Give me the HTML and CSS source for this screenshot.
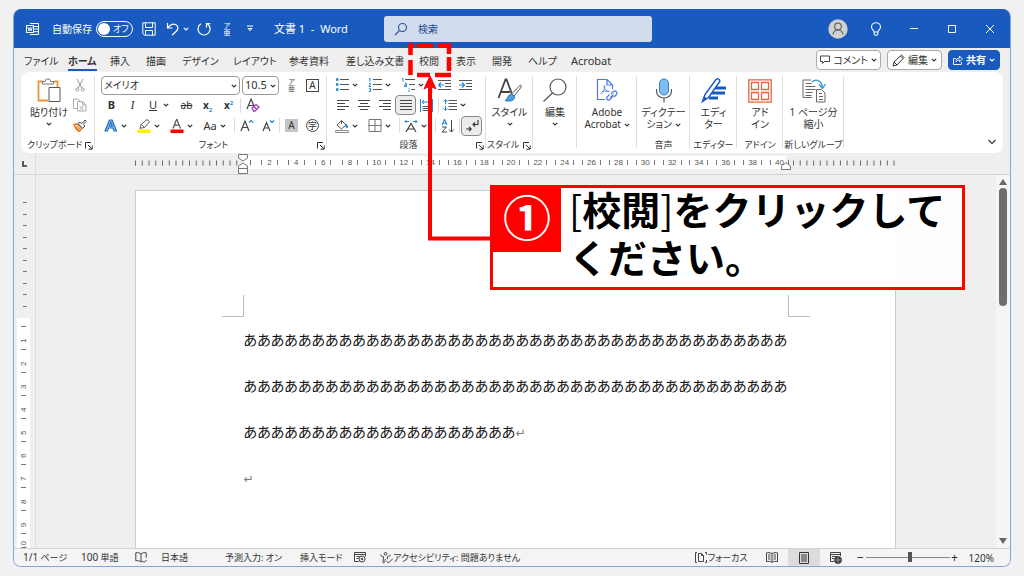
FILE: index.html
```html
<!DOCTYPE html>
<html lang="ja">
<head>
<meta charset="utf-8">
<title>文書 1 - Word</title>
<link rel="stylesheet" href="styles.css">
</head>
<body>
<svg class="defs" aria-hidden="true">
  <symbol id="chev" viewBox="0 0 6 6"><path d="M.8 1.800 3 4l2.200-2.200" fill="none" stroke="currentColor" stroke-width="1.200"/></symbol>
  <symbol id="launch" viewBox="0 0 8 8"><path d="M.5 6.500V.5H6M3 3l4 4M7.200 3.500v3.700H3.500" fill="none" stroke="currentColor"/></symbol>
</svg>
<div class="window">
  <header class="titlebar">
    <div class="title-left">
      <svg class="ic logo" viewBox="0 0 14 14"><path d="M4 1.500h8.500v11H4M4 4.500h8.500M4 7h8.500M4 9.700h8.500" fill="none" stroke="#fff"/><rect x="0.500" y="3.500" width="7" height="7" fill="#185abd" stroke="#fff"/><path d="m1.800 5 1.100 4L4 5.500 5.100 9l1.100-4" fill="none" stroke="#fff" stroke-width=".9"/></svg>
      <span class="autosave" id="as">自動保存</span>
      <button class="toggle" role="switch" aria-checked="false" aria-labelledby="as"><i class="knob"></i><span>オフ</span></button>
      <button class="tb save" aria-label="保存"><svg width="14" height="14" viewBox="0 0 14 14" fill="none" stroke="#fff"><path d="M.8.8h12.400v12.400H2.500L.8 11.500zM3.500 1v4.500h7V1M3.500 13V8.500h7V13"/></svg></button>
      <button class="tb undo" aria-label="元に戻す"><svg width="13" height="14" viewBox="0 0 13 14" fill="none" stroke="#fff" stroke-width="1.200"><path d="M1.500 1v5h5M1.500 6C4 3 7 1.500 9.500 2.500c3 1.200 3 4.500 1 6.500L6 13.200"/></svg><svg class="chev"><use href="#chev"/></svg></button>
      <button class="tb redo" aria-label="やり直し"><svg width="14" height="14" viewBox="0 0 14 14" fill="none" stroke="#fff" stroke-width="1.200"><path d="M4 1.800a6 6 0 1 0 6.500.3M9.500 5.500V1.700h3.800"/></svg></button>
      <button class="tb ruby"><span>ア</span><span>亜</span></button>
      <button class="tb more" aria-label="カスタマイズ"><svg width="6" height="7" viewBox="0 0 6 7" fill="none" stroke="#fff"><path d="M0 1h6M1 3.500h4L3 5.800z"/></svg></button>
      <span class="doctitle lat">文書 1&nbsp; - &nbsp;Word</span>
    </div>
    <label class="search">
      <svg width="14" height="14" viewBox="0 0 14 14" fill="none" stroke="#2b4f94" stroke-width="1.100"><circle cx="8.500" cy="5.500" r="4"/><path d="M5.500 8.500 1 13"/></svg>
      <input type="text" placeholder="検索" aria-label="検索">
    </label>
    <div class="title-right">
      <button class="tb avatar" aria-label="アカウント"><svg width="20" height="20" viewBox="0 0 20 20"><circle cx="10" cy="10" r="9.700" fill="#d0d0d0"/><g fill="none" stroke="#666" stroke-width="1.200"><circle cx="10" cy="7.500" r="3.300"/><path d="M5 15.500c.5-3.500 2.500-4.500 5-4.500s4.500 1 5 4.500"/></g></svg></button>
      <button class="tb" aria-label="ヒント"><svg width="12" height="14" viewBox="0 0 12 14" fill="none" stroke="#fff" stroke-width="1.100"><path d="M4 10C4 8 1.500 7.500 1.500 5a4.500 4.300 0 0 1 9 0C10.500 7.500 8 8 8 10zM4.200 10v2l1 1.300h1.600l1-1.300v-2"/></svg></button>
      <button class="tb" aria-label="最小化"><svg width="8" height="8" viewBox="0 0 8 8"><path d="M0 3.500h8" stroke="#fff"/></svg></button>
      <button class="tb" aria-label="最大化"><svg width="8" height="8" viewBox="0 0 8 8"><path d="M.5.5h7v7h-7z" fill="none" stroke="#fff"/></svg></button>
      <button class="tb" aria-label="閉じる"><svg width="8" height="8" viewBox="0 0 8 8"><path d="m0 0 8 8M8 0 0 8" stroke="#fff"/></svg></button>
    </div>
  </header>

  <div class="tabrow">
    <nav class="tabs">
      <a href="#">ファイル</a><a href="#" class="active">ホーム</a><a href="#">挿入</a><a href="#">描画</a><a href="#">デザイン</a><a href="#">レイアウト</a><a href="#">参考資料</a><a href="#">差し込み文書</a><a href="#">校閲</a><a href="#">表示</a><a href="#">開発</a><a href="#">ヘルプ</a><a href="#" class="lat">Acrobat</a>
    </nav>
    <div class="tabactions">
      <button class="pill"><svg width="10" height="10" viewBox="0 0 10 10" fill="none" stroke="#444"><path d="M.5 1h9v5.500H4.500L2.500 8.500v-2h-2z"/></svg>コメント<svg class="chev"><use href="#chev"/></svg></button>
      <button class="pill"><svg width="13" height="13" viewBox="0 0 13 13" fill="none" stroke="#333"><path d="m1 12 1-4 7.500-7 2.500 2.500L5 11zM8.500 2 11 4.500M2 8l3 3"/></svg>編集<svg class="chev"><use href="#chev"/></svg></button>
      <button class="pill share"><svg width="10" height="10" viewBox="0 0 10 10" fill="none" stroke="#fff"><path d="M3 3.500H.5v6h8V7M3 7c0-3 1.500-4 3.500-4V1l3 3-3 2.700V5C5 5 4 5.500 3 7z" stroke-width=".9"/></svg>共有<svg class="chev"><use href="#chev"/></svg></button>
    </div>
  </div>

  <div class="ribbon">
    <section class="group g-clip">
      <div class="clip">
        <button class="big paste"><svg width="26" height="25" viewBox="0 0 26 25" fill="none"><path d="M7 3.500H2.500v19H12M18 3.500h3.500V9" stroke="#e8963a" stroke-width="1.800"/><path d="M6.500 6V3.500h2.700a2.500 2.500 0 0 1 5.400 0h2.900V6z" stroke="#777" fill="#fff"/><path d="M13 9.500h11v14H13z" fill="#fff" stroke="#555"/></svg><span>貼り付け</span><svg class="chev"><use href="#chev"/></svg></button>
        <div class="stack">
          <button aria-label="切り取り"><svg width="10" height="14" viewBox="0 0 10 14" fill="none" stroke="#999"><path d="M2 1l4.800 9M8 1 3.200 10"/><circle cx="2.300" cy="11.500" r="1.500"/><circle cx="7.700" cy="11.500" r="1.500"/></svg></button>
          <button aria-label="コピー"><svg width="14" height="14" viewBox="0 0 14 14" fill="none" stroke="#aaa"><path d="M4.500 10.500h-4V1h4.500l2 2M4.500 3.500h5l3.500 3.500v6H4.500zM9.500 3.500V7H13M6.500 9h4M6.500 11h4"/></svg></button>
          <button aria-label="書式のコピー"><svg width="14" height="13" viewBox="0 0 14 13"><path d="m1 5.500 4-.5 4 4-2.500 3.500C4 11.500 2 9 1 5.500z" fill="#fbd7b0" stroke="#e07b20" stroke-width="1.400"/><path d="m5 4.500 2-1.500 1.800 1.500L12 1l1.300 1.300-3 3L12 7 9.500 9.300z" fill="#fff" stroke="#444"/><path d="m3 8 3 3M4.500 7l2.500 3" stroke="#e07b20"/></svg></button>
        </div>
      </div>
      <div class="glabel">クリップボード<svg class="launch"><use href="#launch"/></svg></div>
    </section>

    <section class="group g-font">
      <div class="row combos">
        <span class="combo wide"><select aria-label="フォント"><option>メイリオ</option></select><svg class="chev"><use href="#chev"/></svg></span>
        <span class="combo small"><select class="lat" aria-label="フォント サイズ"><option>10.5</option></select><svg class="chev"><use href="#chev"/></svg></span>
        <button class="ruby dark"><span>ア</span><span>亜</span></button>
        <button><span class="boxed">A</span></button>
      </div>
      <div class="row">
        <button><b class="lt">B</b></button><button><i class="lt serif">I</i></button><button class="split"><u class="lt">U</u><svg class="chev"><use href="#chev"/></svg></button><button><s class="lt sm">ab</s></button><button><b class="lt sm">x<sub>2</sub></b></button><button><b class="lt sm">x<sup>2</sup></b></button><i class="sep"></i>
        <button aria-label="書式のクリア"><svg width="14" height="14" viewBox="0 0 14 14" fill="none"><path d="M1 11 5 1l3.500 8M2.500 7.500h5" stroke="#444" stroke-width="1.200"/><path d="m6 10 4-3.500 3 2.500-4 4H7.500zM8 8.500l2.500 3" stroke="#9b3fb5" stroke-width="1.300"/></svg></button>
      </div>
      <div class="row">
        <button class="split" aria-label="文字の効果"><svg width="14" height="13" viewBox="0 0 14 13"><path d="M1 12 5.500 1h2.500L12.500 12H10L9 9H4.500l-1 3zM5.300 6.800h3L6.800 3.200z" fill="#8cc4ee" stroke="#1f6fc0" stroke-width="1.200"/></svg><svg class="chev"><use href="#chev"/></svg></button>
        <button class="split" aria-label="蛍光ペン"><svg width="14" height="14" viewBox="0 0 14 14"><path d="M.5 10.500h13V14H.5z" fill="#fff000"/><path d="M3 9.500l1-4 6-5 2.500 2.300L7.500 8.500 4.500 9zM4.500 5.500l3 3" fill="none" stroke="#555"/></svg><svg class="chev"><use href="#chev"/></svg></button>
        <button class="split" aria-label="フォントの色"><svg width="14" height="14" viewBox="0 0 14 14"><path d="M.5 10.500h13V14H.5z" fill="#f00"/><path d="M3 9.500 6.700 0 10.500 9.500M4.200 6.200h5" fill="none" stroke="#555" stroke-width="1.200"/></svg><svg class="chev"><use href="#chev"/></svg></button>
        <button class="split"><span class="lt">Aa</span><svg class="chev"><use href="#chev"/></svg></button><i class="sep"></i>
        <button aria-label="拡大"><svg width="14" height="13" viewBox="0 0 14 13" fill="none"><path d="M1 12 5 2l4 10M2.500 8.500h5" stroke="#444" stroke-width="1.200"/><path d="m9 3.500 2-2 2 2" stroke="#1e88d0" stroke-width="1.200"/></svg></button>
        <button aria-label="縮小"><svg width="14" height="13" viewBox="0 0 14 13" fill="none"><path d="M2 12 5.500 3.500 9 12M3.200 9h4.600" stroke="#444" stroke-width="1.200"/><path d="m9 1.500 2 2 2-2" stroke="#1e88d0" stroke-width="1.200"/></svg></button><i class="sep"></i>
        <button><span class="shaded">A</span></button>
        <button><span class="circled">字</span></button>
      </div>
      <div class="glabel">フォント<svg class="launch"><use href="#launch"/></svg></div>
    </section>

    <section class="group g-para">
      <div class="row">
        <button class="split" aria-label="箇条書き"><svg width="14" height="14" viewBox="0 0 14 14"><path d="M1 1.500h2.500M1 6.500h2.500M1 11.500h2.500" stroke="#1e88d0" stroke-width="2.400"/><path d="M5 1.500h9M5 6.500h9M5 11.500h9" stroke="#555"/></svg><svg class="chev"><use href="#chev"/></svg></button>
        <button class="split" aria-label="段落番号"><svg width="14" height="14" viewBox="0 0 14 14" fill="none"><path d="M1 .5h1v3M1 5.500h1.500L1 8.500h2M1 10.500h1.500v3H1M1.500 12h1" stroke="#1e88d0"/><path d="M5 1.500h9M5 6.500h9M5 11.500h9" stroke="#555"/></svg><svg class="chev"><use href="#chev"/></svg></button>
        <button class="split" aria-label="アウトライン"><svg width="14" height="14" viewBox="0 0 14 14" fill="none"><path d="M1 .5h1v3M4 5.500h1.500v3H3.500V7h2M8 10v.8M8 11.800V14" stroke="#1e88d0"/><path d="M4 1.500h10M8 6.500h6M10 11.500h4" stroke="#555"/></svg><svg class="chev"><use href="#chev"/></svg></button><i class="sep"></i>
        <button aria-label="インデントを減らす"><svg width="13" height="12" viewBox="0 0 13 12" fill="none"><path d="M0 1.500h13M7 4.500h6M7 7.500h6M0 10.500h13" stroke="#555"/><path d="M6 6H.7M3 3.500.5 6 3 8.500" stroke="#1e88d0" stroke-width="1.200"/></svg></button>
        <button aria-label="インデントを増やす"><svg width="13" height="12" viewBox="0 0 13 12" fill="none"><path d="M0 1.500h13M7 4.500h6M7 7.500h6M0 10.500h13" stroke="#555"/><path d="M0 6h5.500M3 3.500 5.500 6 3 8.500" stroke="#1e88d0" stroke-width="1.200"/></svg></button>
      </div>
      <div class="row">
        <button aria-label="左揃え"><svg width="12" height="12" viewBox="0 0 12 12"><path d="M0 1.500h12M0 4.500h8M0 7.500h12M0 10.500h8" stroke="#444"/></svg></button>
        <button aria-label="中央揃え"><svg width="12" height="12" viewBox="0 0 12 12"><path d="M0 1.500h12M2 4.500h8M0 7.500h12M2 10.500h8" stroke="#444"/></svg></button>
        <button aria-label="右揃え"><svg width="12" height="12" viewBox="0 0 12 12"><path d="M0 1.500h12M4 4.500h8M0 7.500h12M4 10.500h8" stroke="#444"/></svg></button>
        <button class="on" aria-label="両端揃え" aria-pressed="true"><svg width="12" height="12" viewBox="0 0 12 12"><path d="M0 1.500h12M0 4.500h12M0 7.500h12M0 10.500h12" stroke="#444"/></svg></button>
        <button aria-label="均等割り付け"><svg width="13" height="13" viewBox="0 0 13 13" fill="none"><path d="M.5 0v13M12.500 0v13M2 3h9M4 1 2 3l2 2M9 1l2 2-2 2" stroke="#1e88d0"/><path d="M2.500 7.500h8M2.500 9.500h8M2.500 11.500h8" stroke="#555"/></svg></button><i class="sep"></i>
        <button class="split" aria-label="行間"><svg width="14" height="12" viewBox="0 0 14 12" fill="none"><path d="M5.500 1.500H14M5.500 4.500H14M5.500 7.500H14M5.500 10.500H14" stroke="#555"/><path d="M2.500.5v4.700M.5 2.700l2-2 2 2M2.500 6.800v4.700M.5 9.300l2 2 2-2" stroke="#1e88d0"/></svg><svg class="chev"><use href="#chev"/></svg></button>
      </div>
      <div class="row">
        <button class="split" aria-label="塗りつぶし"><svg width="14" height="14" viewBox="0 0 14 14" fill="none"><path d="M.7 11.500h12.600v2H.7z" stroke="#888"/><path d="m2 6 4.500-4.500L11 6l-4.500 4zM6.500 1.500V5" stroke="#555"/><path d="M11.500 5.500c1.500 2 1.300 3 .5 3.300-1 .2-1.500-1-.5-3.300z" fill="#1e88d0" stroke="#1e88d0"/></svg><svg class="chev"><use href="#chev"/></svg></button>
        <button class="split" aria-label="罫線"><svg width="13" height="13" viewBox="0 0 13 13"><path d="M.5.5h12v12H.5zM6.500 0v13M0 6.500h13" fill="none" stroke="#777"/></svg><svg class="chev"><use href="#chev"/></svg></button><i class="sep"></i>
        <button class="split" aria-label="拡張書式"><svg width="14" height="14" viewBox="0 0 14 14" fill="none"><path d="M2 13 7 4.500 12 13M3.800 10h6.400" stroke="#444" stroke-width="1.200"/><path d="M5 2.500H1M2.500 1 1 2.500 2.500 4M9 2.500h4M11.500 1 13 2.500 11.500 4" stroke="#1e88d0"/></svg><svg class="chev"><use href="#chev"/></svg></button><i class="sep"></i>
        <button aria-label="並べ替え"><svg width="14" height="14" viewBox="0 0 14 14" fill="none"><path d="M1 6 3.500.5 6 6M2 4.300h3" stroke="#1e88d0" stroke-width="1.100"/><path d="M1 8h4.500L1 13h5M10.500 1v12M8 10.500l2.500 2.500 2.500-2.500" stroke="#444"/></svg></button><i class="sep"></i>
        <button class="on" aria-label="編集記号" aria-pressed="true"><svg width="14" height="14" viewBox="0 0 14 14" fill="none" stroke="#333" stroke-width="1.100"><path d="M13 1v4.500H8M10 3.500l-2 2 2 2M1 10h5M4 8l2.200 2L4 12.200"/></svg></button>
      </div>
      <div class="glabel">段落<svg class="launch"><use href="#launch"/></svg></div>
    </section>

    <section class="group g-style">
      <button class="big"><svg width="26" height="25" viewBox="0 0 26 25" fill="none"><path d="M1.500 20 8.500 1.500h1L15 16M4 14h9" stroke="#444" stroke-width="1.800"/><path d="M23.500 7c1 .5 1 1.500 0 3L17 18l-2.500-2z" fill="#fff" stroke="#555"/><path d="M14.500 16l3 2.500c0 4-4 5.500-9.500 4 3-1 2-5.500 6.500-6.500z" fill="#4ea3e0" stroke="#1e6fb5"/></svg><span>スタイル</span><svg class="chev"><use href="#chev"/></svg></button>
      <div class="glabel">スタイル<svg class="launch"><use href="#launch"/></svg></div>
    </section>
    <section class="group g-edit">
      <button class="big"><svg width="26" height="25" viewBox="0 0 26 25" fill="none" stroke="#555" stroke-width="1.200"><circle cx="16" cy="9" r="8"/><path d="M10.500 15 1.500 23.500"/></svg><span>編集</span><svg class="chev"><use href="#chev"/></svg></button>
      <div class="glabel"></div>
    </section>
    <section class="group g-adobe">
      <button class="big"><svg width="22" height="25" viewBox="0 0 22 25" fill="none" stroke="#4a78e8" stroke-width="1.200"><path d="M9 21.500H1.500V1.500H11L16.500 7v4M11 1.500V7h5.500"/><path d="M4.500 15.500c3-1.500 5-6 4-8-1.500 1.500 1.500 6.500 5 6M5 15c2-2 5-2.500 8-1.500" stroke-width=".9"/><path d="m15 16 2.500-2.500c2-1.500 4.500 1 3 3L18 19M17 18l-3 3.500c-2 1.500-4-.5-3-2.500l2.500-2.500M14.500 19.500l3-3"/></svg><span>Adobe<br>Acrobat <svg class="chev"><use href="#chev"/></svg></span></button>
      <div class="glabel"></div>
    </section>
    <section class="group g-dict">
      <button class="big"><svg width="20" height="25" viewBox="0 0 20 25" fill="none"><rect x="5.500" y="1" width="9" height="16" rx="4.500" fill="#7dbdf0" stroke="#2a7cc7"/><path d="M2.500 11v2c0 4 3 7 7.500 7s7.500-3 7.500-7v-2M10 20v4.500" stroke="#555" stroke-width="1.200"/></svg><span>ディクテー<br>ション <svg class="chev"><use href="#chev"/></svg></span></button>
      <div class="glabel">音声</div>
    </section>
    <section class="group g-editor">
      <button class="big"><svg width="26" height="25" viewBox="0 0 26 25"><path d="M13 10h12M10 15h14M8 20h9" stroke="#185abd" stroke-width="3.200"/><path d="M1.500 23.500 4 16.500 15 1.500c2-1.500 4.500 0 3.500 2.500L7.500 19.500z" fill="#fff" stroke="#185abd" stroke-width="1.500"/><path d="M1 24l2-6 3 2.500z" fill="#185abd"/></svg><span>エディ<br>ター</span></button>
      <div class="glabel">エディター</div>
    </section>
    <section class="group g-addin">
      <button class="big"><svg width="24" height="25" viewBox="0 0 24 25" fill="none" stroke="#e0663f"><path d="M.8 1.800h22.400v22.400H.8z" stroke-width="1.300"/><path d="M3.500 4.500h7v7h-7zM13.500 4.500h7v7h-7zM3.500 14.500h7v7h-7zM13.500 14.500h7v7h-7z" stroke-width="1.300"/></svg><span>アド<br>イン</span></button>
      <div class="glabel">アドイン</div>
    </section>
    <section class="group g-new">
      <button class="big"><svg width="24" height="25" viewBox="0 0 24 25" fill="none"><path d="M10 19.500H1V2h8M3.500 5.500h6M3.500 8.500h10M3.500 11.500h10M3.500 14.500h7M3.500 17.500h6" stroke="#666"/><path d="M14.500 11.500h5l3.500 3.500v9h-8.500zM17 15.500h3M17 18.500h4M17 21.500h4" stroke="#666"/><path d="M10 4c4-4 10-1 10.500 5.500M17 6.500l3.500 4 3-4.500" stroke="#2a9be0" stroke-width="1.300"/></svg><span>1 ページ分<br>縮小</span></button>
      <div class="glabel">新しいグループ</div>
    </section>
    <button class="collapse" aria-label="リボンを折りたたむ"><svg width="8" height="6" viewBox="0 0 8 6"><path d="m.5 1 3.500 3.500L7.500 1" fill="none" stroke="#333" stroke-width="1.200"/></svg></button>
  </div>

  <div class="hruler">
    <div class="corner"><svg width="5" height="6" viewBox="0 0 5 6"><path d="M1 0v5h4" fill="none" stroke="#333" stroke-width="1.600"/></svg></div>
    <div class="scale">
      <svg class="outer" viewBox="0 0 108 6"><path d="M0 3h103" stroke="#666" stroke-width="5" stroke-dasharray="1 5.750"/></svg>
      <div class="inner"><i class="first"></i>
        <span>2</span><span>4</span><span>6</span><span>8</span><span>10</span><span>12</span><span>14</span><span>16</span><span>18</span><span>20</span><span>22</span><span>24</span><span>26</span><span>28</span><span>30</span><span>32</span><span>34</span><span>36</span><span>38</span><span>40</span>
        <svg class="indent" viewBox="0 0 10 20" fill="#fff" stroke="#777"><path d="M.5.5h9V4L5 7 .5 4zM.5 19.500v-7.500L5 9l4.500 3v7.500zM.5 14.500h9"/></svg>
        <svg class="indent right" viewBox="0 0 10 8" fill="#fff" stroke="#777"><path d="M.5 7.500V4L5 .7 9.500 4v3.500z"/></svg>
      </div>
      <svg class="outer right" viewBox="0 0 109 6"><path d="M7 3h102" stroke="#666" stroke-width="5" stroke-dasharray="1 5.700"/></svg>
    </div>
  </div>

  <main class="work">
    <div class="vruler">
      <div class="vtop"><i></i><i></i><i></i><i></i><i></i><i></i><i></i><i></i><i></i><i></i></div>
      <div class="vbody"><span>1</span><span>2</span><span>3</span><span>4</span><span>5</span><span>6</span><span>7</span><span>8</span><span>9</span><span>10</span></div>
    </div>
    <div class="canvas">
      <article class="page">
        <div class="marks"><i class="ml"></i><i class="mr"></i></div>
        <p>ああああああああああああああああああああああああああああああああああああああああ<br>ああああああああああああああああああああああああああああああああああああああああ<br>ああああああああああああああああああああ<span class="ret">↵</span></p>
        <p><span class="ret">↵</span></p>
      </article>
    </div>
    <div class="vscroll">
      <svg width="8" height="6" viewBox="0 0 8 6"><path d="M4 0 8 6H0z" fill="#666"/></svg>
      <i class="thumb"></i>
      <svg class="down" width="8" height="6" viewBox="0 0 8 6"><path d="M4 6 8 0H0z" fill="#666"/></svg>
    </div>
  </main>

  <footer class="status">
    <div class="st-left">
      <span><span class="lat">1/1</span> ページ</span><span><span class="lat">100</span> 単語</span>
      <svg width="12" height="11" viewBox="0 0 12 11" fill="none" stroke="#444"><path d="M6 2C4.500.5 2.500.5.8.8v8C2.500 8.500 4.500 8.500 6 10M6 2C7.500.5 9.500.5 11.200.8v5M6 2v8l1.500-1 1.500 1.500L11.500 8"/></svg>
      <span>日本語</span><span>予測入力: オン</span><span>挿入モード</span>
      <svg width="12" height="11" viewBox="0 0 12 11" fill="none" stroke="#444"><path d="M5 9.500H.5v-9h11v4M.5 2.500h11M2.500 4.500h3M2.500 6.500h2"/><circle cx="8" cy="7" r="3"/><circle cx="8" cy="7" r=".8" fill="#444"/></svg>
      <span class="acc"><svg width="13" height="12" viewBox="0 0 13 12" fill="none" stroke="#444"><circle cx="5.500" cy="1.800" r="1.300"/><path d="M1 2.500c-1 1 0 1.500 2.500 2.200L3 10.500c.5 1 1.500.5 2-2l.5-1.500M10 2.500c1 1 0 1.500-2.500 2.200v2.500M6.500 9l2 2L13 6.500"/></svg>アクセシビリティ: 問題ありません</span>
    </div>
    <div class="st-right">
      <button class="focus"><svg width="12" height="11" viewBox="0 0 12 11" fill="none" stroke="#444"><path d="M2 .5H.5v10H2M10 .5h1.500v2M11.500 8v2.500H10M3.500 1.500h3l2 2v6h-5zM6.500 1.500v2h2"/></svg>フォーカス</button>
      <button class="view" aria-label="閲覧モード"><svg width="12" height="11" viewBox="0 0 12 11" fill="none" stroke="#444"><path d="M6 1.500C4 .5 2 .5.5.8v8.700c2-.3 4-.3 5.500.8 1.500-1.100 3.500-1.100 5.500-.8V.8C10 .5 8 .5 6 1.500zM6 1.500v9M2 3h2.500M2 5h2.500M2 7h2.500M7.500 3H10M7.500 5H10M7.500 7H10"/></svg></button>
      <button class="view on" aria-label="印刷レイアウト"><svg width="10" height="12" viewBox="0 0 10 12" fill="none" stroke="#333"><path d="M.5.5h9v11h-9zM2 3h6M2 5h6M2 7h6M2 9h6"/></svg></button>
      <button class="view" aria-label="Webレイアウト"><svg width="12" height="12" viewBox="0 0 12 12" fill="none" stroke="#444"><path d="M4 9.500H.5v-9h10V4M.5 2.500h10M2 4.500h5M2 6.500h2"/><circle cx="8" cy="8" r="3.500" fill="#333"/><path d="M8 5v6M5 8h6" stroke="#bbb" stroke-width=".7"/></svg></button>
      <span class="minus">−</span>
      <input type="range" min="0" max="100" value="53" aria-label="ズーム">
      <span class="plus">+</span>
      <span class="lat pct">120%</span>
    </div>
  </footer>
</div>

<svg class="arrow" viewBox="0 0 90 200" fill="none" stroke="#f00">
  <path d="M22 42v151.500h68" stroke-width="4"/>
  <path d="M22 31 28 44 22 41 16 44z" fill="#f00" stroke="#f00"/>
  <path d="M2.500 10V0.500H6M9 .5H25M30 .5H41V9M41 12V26M2.500 15V30M9 30H22M27 30H43" stroke-width="4.500"/>
</svg>
<aside class="callout">
  <span class="num">①</span>
  <p><span class="br">[</span>校閲<span class="br">]</span>をクリックして<br>ください。</p>
</aside>
</body>
</html>
```
FILE: styles.css
```css
* { box-sizing: border-box; }
body {
  margin: 0;
  padding: 9px 13px;
  height: 100vh;
  background: #f1f1f1;
  color: #333;
  font: 10px/14px "Noto Sans", "Noto Sans CJK JP", sans-serif;
  font-feature-settings: "palt";
  overflow: hidden;
}
button, input, select {
  font: inherit;
  font-feature-settings: inherit;
  color: inherit;
  margin: 0;
  padding: 0;
  border: 0;
  background: none;
}
a { color: inherit; text-decoration: none; }
svg { display: block; flex: none; }
.defs { position: absolute; width: 0; height: 0; }
.lat { font-size: 11px; }
.chev { width: 6px; height: 6px; }
.launch { width: 8px; height: 8px; }
.window {
  height: 100%;
  display: flex;
  flex-direction: column;
  border: 1px solid #7ea6e0;
  border-width: 0 1px 1px;
  border-radius: 8px;
  overflow: hidden;
  background: #efefef;
}

/* title bar */
.titlebar {
  flex: none;
  height: 39px;
  display: flex;
  align-items: center;
  background: #185abd;
  color: #fff;
}
.title-left { width: 370px; display: flex; align-items: center; padding-left: 12px; white-space: nowrap; }
.logo { width: 14px; height: 14px; }
.autosave { width: 44px; margin-left: 12px; }
.toggle {
  width: 37px;
  height: 16px;
  display: flex;
  align-items: center;
  gap: 3px;
  padding-left: 1px;
  border: 1px solid #fff;
  border-radius: 8px;
  font-size: 9px;
}
.knob { width: 12px; height: 12px; border-radius: 50%; background: #fff; }
.tb { display: flex; align-items: center; justify-content: center; gap: 4px; }
.save { margin-left: 9px; }
.undo { margin-left: 10px; }
.redo { margin-left: 8px; }
.ruby { flex-direction: column; gap: 0; font-size: 7px; line-height: 7px; }
.tb.ruby { width: 32px; }
.more { width: 14px; }
.doctitle { margin-left: 17px; }
.search {
  width: 268px;
  height: 26px;
  display: flex;
  align-items: center;
  gap: 10px;
  padding-left: 10px;
  border-radius: 3px;
  background: #d1dcee;
}
.search input { flex: 1; min-width: 0; outline: 0; }
.search input::placeholder { color: #24478c; opacity: 1; }
.title-right { flex: 1; display: flex; justify-content: flex-end; padding-right: 1px; }
.title-right .tb { width: 38px; height: 20px; }

/* tabs */
.tabrow { flex: none; height: 24px; display: flex; align-items: center; justify-content: space-between; padding: 0 10px; }
.tabs {
  display: grid;
  grid-template-columns: 44px 42px 36px 36px 51px 56px 57px 73px 37px 36px 36px 43px 44px;
  align-items: center;
  justify-items: start;
  padding-top: 3px;
  white-space: nowrap;
}
.tabs a { line-height: 16px; border-bottom: 2px solid transparent; }
.tabs .active { font-weight: 700; border-color: #185abd; }
.tabactions { display: flex; gap: 6px; }
.pill {
  height: 20px;
  display: flex;
  align-items: center;
  justify-content: center;
  gap: 3px;
  padding: 0 3px;
  border: 1px solid #aaa;
  border-radius: 4px;
  background: #fff;
  white-space: nowrap;
}
.pill + .pill { padding: 0 4px; }
.share { background: #185abd; border-color: #185abd; color: #fff; font-weight: 700; }

/* ribbon */
.ribbon {
  flex: none;
  display: flex;
  margin: 0 7px;
  padding: 3px 0 1px;
  border-radius: 8px;
  background: #fff;
  position: relative;
}
.group { display: flex; flex-direction: column; position: relative; }
.group::after { content: ""; position: absolute; right: 0; top: 1px; bottom: 4px; width: 1px; background: #ddd; }
.group button { flex: none; display: flex; align-items: center; justify-content: center; }
.g-clip { width: 74px; }
.g-font { width: 232px; padding-left: 6px; }
.g-para { width: 159px; padding-left: 5px; }
.g-style { width: 47px; }
.g-edit { width: 44px; }
.g-adobe { width: 60px; }
.g-dict { width: 53px; }
.g-editor { width: 47px; }
.g-addin { width: 46px; }
.g-new { width: 61px; }
.row { height: 20px; display: flex; align-items: center; }
.row + .row + .row { height: 21px; }
.row > button { width: 21px; height: 20px; }
.row > .split { width: 33px; justify-content: flex-start; }
.split > :first-child { width: 20px; padding: 0 3px; text-align: center; flex: none; }
.split > .lt { padding: 0; }
.sep { width: 1px; height: 15px; margin: 0 1px; background: #ddd; }
.row > .on { border: 1px solid #888; border-radius: 4px; background: #ececec; }
.glabel {
  height: 16px;
  padding: 1px 0 0 3px;
  display: flex;
  align-items: center;
  justify-content: center;
  font-size: 9px;
  white-space: nowrap;
}
.glabel .launch { margin: 2px 2px 0 auto; }
.g-clip .glabel { padding-left: 6px; justify-content: flex-start; }
.g-font .glabel::before, .g-para .glabel::before { content: ""; width: 6px; margin-right: auto; }
.g-style .glabel { padding-left: 1px; }
.g-edit .glabel, .g-dict .glabel, .g-editor .glabel, .g-addin .glabel, .g-new .glabel { padding-left: 0; }
.clip { height: 61px; display: flex; }
.paste { width: 56px; }
.stack { display: flex; flex-direction: column; justify-content: space-around; margin-left: -4px; }
.stack button { height: 20px; width: 14px; }
.group .big { height: 61px; flex-direction: column; justify-content: flex-start; padding-top: 3px; white-space: nowrap; line-height: 12px; }
.big > span { margin-top: 3px; }
.big > .chev { margin-top: 3px; }
.big span .chev { display: inline-block; vertical-align: middle; }
.combos { gap: 2px; }
.combos > button { margin-right: -2px; }
.combo { position: relative; height: 19px; border: 1px solid #999; border-radius: 4px; display: flex; }
.combo.wide { width: 139px; }
.combo.small { width: 37px; }
.combo select { width: 100%; appearance: none; padding-left: 2px; outline: 0; }
.combo .chev { position: absolute; right: 2px; top: 6px; }
.dark { color: #555; }
.boxed { width: 13px; height: 13px; border: 1px solid #444; line-height: 11px; text-align: center; }
.shaded { width: 13px; height: 13px; background: #c4c4c4; line-height: 13px; text-align: center; }
.circled { width: 13px; height: 13px; border: 1px solid #444; border-radius: 50%; font-size: 9px; line-height: 11px; text-align: center; }
.lt { font-size: 11px; line-height: 14px; }
.sm { font-size: 10px; }
.serif { font-family: "Liberation Serif", serif; font-size: 12px; }
sub, sup { font-size: 6px; line-height: 0; color: #1e88d0; }
.collapse { position: absolute; right: 7px; bottom: 8px; }

/* rulers */
.hruler { flex: none; height: 22px; display: flex; border-bottom: 1px solid #d4d4d4; }
.corner { width: 22px; padding: 8px 0 0 8px; border-right: 1px solid #ddd; }
.scale { flex: 1; display: flex; justify-content: center; padding: 3px 16px 0 0; }
.outer { width: 108px; height: 6px; margin-top: 4px; }
.outer.right { width: 109px; }
.inner {
  width: 543px;
  height: 13px;
  display: flex;
  position: relative;
  background: #fff;
  color: #555;
  font: 8px/13px "Liberation Sans", sans-serif;
}
.first { width: 1px; height: 5px; margin: 4px -1px 0 7px; background: #666; }
.inner span { flex: 1 1 0; min-width: 0; display: flex; align-items: center; justify-content: space-evenly; }
.inner span:first-of-type { margin-left: 6px; }
.inner span:last-of-type { margin-right: -7px; }
.inner span::before, .inner span::after { content: ""; width: 1px; height: 5px; background: #777; }
.indent { position: absolute; left: -5px; top: -2px; width: 10px; height: 20px; }
.indent.right { left: auto; right: -5px; top: 6px; height: 8px; }
.work { flex: 1; min-height: 0; display: flex; }
.vruler { flex: none; width: 22px; border-right: 1px solid #ddd; display: flex; flex-direction: column; overflow: hidden; padding: 0 5px 0 3px; }
.vtop { flex: none; height: 143px; padding: 27px 3px 11px 6px; display: flex; flex-direction: column; justify-content: space-between; }
.vtop i { height: 1px; background: #777; }
.vbody { background: #fff; padding-top: 8px; flex: 1; font: 8px/12px "Liberation Sans", sans-serif; color: #555; }
.vbody span { height: 23px; display: flex; justify-content: space-between; flex-direction: row; writing-mode: vertical-rl; transform: rotate(180deg); margin: auto; padding: 6px 0 0; }
.vbody span::after { content: ""; width: 5px; height: 1px; background: #777; align-self: center; }
.canvas { flex: 1; display: flex; justify-content: center; padding: 15px 2px 0 0; }
.page { width: 761px; border: 1px solid #ccc; border-bottom: 0; background: #fff; padding: 104px 85px 0 86px; }
.marks { display: flex; justify-content: space-between; }
.marks i { width: 22px; height: 22px; border-bottom: 1px solid #bbb; }
.marks .ml { border-right: 1px solid #bbb; }
.marks .mr { border-left: 1px solid #bbb; }
.page p { margin: 0 22px; color: #111; font-size: 14px; line-height: 46px; white-space: nowrap; }
.page .ret { font: 12px "DejaVu Sans", sans-serif; color: #777; }
.vscroll { flex: none; width: 14px; background: #f5f5f5; display: flex; flex-direction: column; align-items: center; padding: 4px 0; }
.thumb { width: 8px; height: 118px; margin-top: 3px; border-radius: 4px; background: #6e6e6e; }
.down { margin-top: auto; }

/* status bar */
.status { flex: none; height: 18px; display: flex; align-items: center; justify-content: space-between; border-top: 1px solid #d4d4d4; background: #f4f4f4; padding: 0 16px 0 9px; white-space: nowrap; }
.st-left { display: grid; grid-template-columns: 58px 54px 26px 64px 75px 54px 26px auto; align-items: center; font-size: 9px; }
.st-left .lat { font-size: 10px; }
.st-left svg { margin: auto 0; }
.acc { display: flex; align-items: center; }
.st-right { display: flex; align-items: center; font-size: 9px; height: 100%; }
.focus { display: flex; align-items: center; gap: 1px; margin-right: 8px; }
.view { width: 32px; height: 100%; display: flex; align-items: center; justify-content: center; }
.view.on { background: #dcdcdc; }
.minus, .plus { width: 10px; text-align: center; font-size: 12px; }
.minus { margin-left: 4px; }
.pct { font-size: 10px; margin-left: 9px; }
input[type="range"] { width: 84px; height: 12px; appearance: none; }
input[type="range"]::-webkit-slider-runnable-track { height: 1px; background: #888; }
input[type="range"]::-webkit-slider-thumb { appearance: none; width: 4px; height: 10px; margin-top: -5px; background: #555; }

/* annotation */
.arrow { position: absolute; left: 408px; top: 45px; width: 90px; height: 200px; overflow: visible; }
.callout {
  position: absolute;
  left: 490px;
  top: 185px;
  width: 475px;
  height: 105px;
  display: flex;
  align-items: flex-start;
  border: 3px solid #f00;
  background: #fffffff0;
}
.num { width: 68px; height: 64px; background: #f00; color: #fff; font: 700 48px/54px "Noto Sans CJK JP", sans-serif; text-align: center; font-feature-settings: normal; }
.callout p { margin: -4px 0 0 8px; color: #000; font: 700 39px/48px "Noto Sans CJK JP", sans-serif; font-feature-settings: normal; white-space: nowrap; }
.callout .br { font-weight: 400; }
```
